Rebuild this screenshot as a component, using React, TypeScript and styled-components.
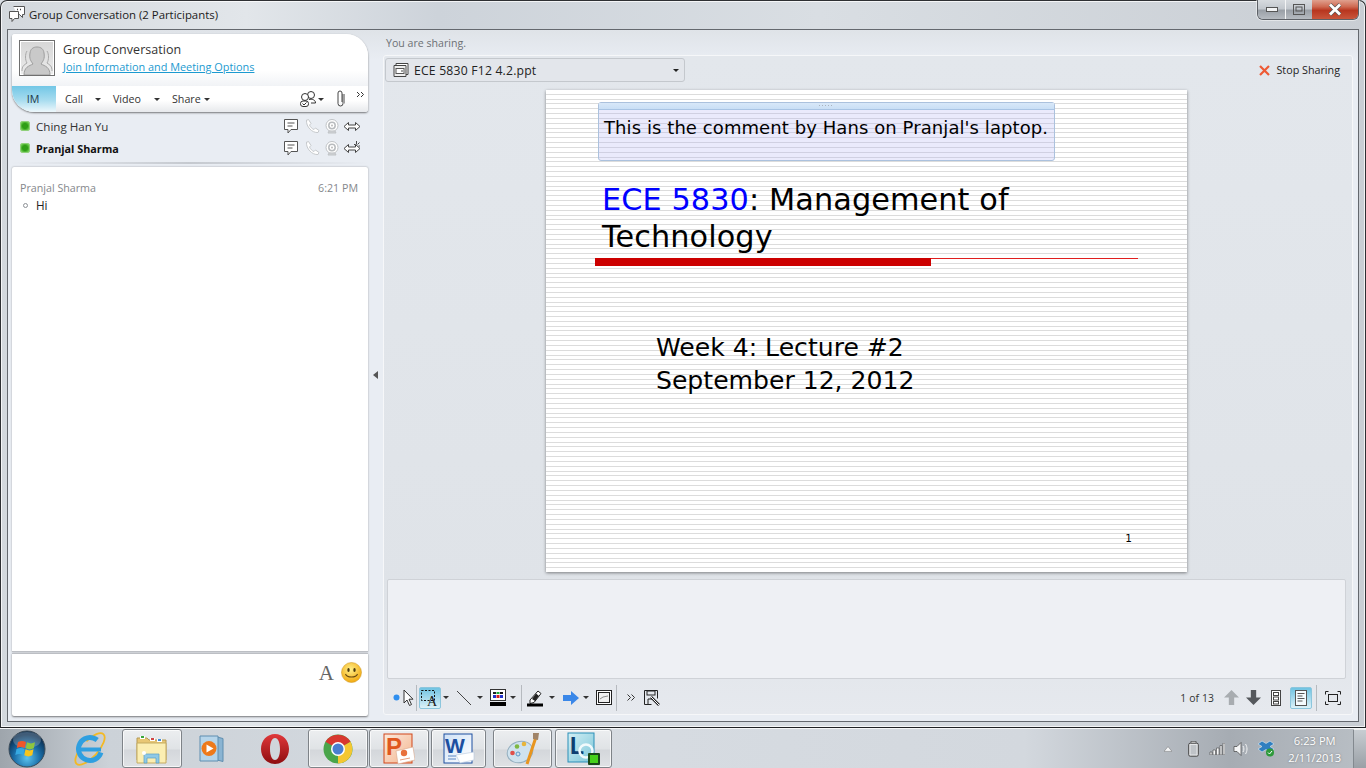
import React from "react";
import styled, { createGlobalStyle } from "styled-components";

const Global = createGlobalStyle`
  html, body { margin: 0; padding: 0; width: 1366px; height: 768px; overflow: hidden; background: #d8dde3; }
  #root { width: 1366px; height: 768px; }
  * { box-sizing: border-box; }
`;

const UI = `"Open Sans", "Noto Sans", sans-serif`;
const SLIDE = `"DejaVu Sans", Verdana, sans-serif`;

const Screen = styled.div`
  width: 1366px; height: 768px; display: flex; flex-direction: column;
  font-family: ${UI}; color: #222; overflow: hidden;
`;
const Win = styled.div`
  height: 728px; display: flex; flex-direction: column; position: relative;
  border: 1px solid #2e3033; border-bottom-color: #1f2124; border-radius: 7px 7px 0 0;
  box-shadow: inset 0 0 0 1px rgba(255,255,255,.75);
  background: linear-gradient(90deg, #d3d8dd 0, #e2e6ea 18%, #cdd3da 32%, #d9dee3 60%, #c9ced4 100%);
  padding: 0 6px 5px 6px;
`;
const TitleBar = styled.div`
  height: 28px; display: flex; align-items: center; padding: 0 0 2px 1px; gap: 3px;
  font-size: 11.4px; color: #1b1b1b; flex: none;
`;
const Controls = styled.div`
  position: absolute; top: -1px; right: 6px; height: 20px; display: flex;
  border: 1px solid #5d6167; border-top: none; border-radius: 0 0 6px 6px; overflow: hidden;
  box-shadow: 0 0 0 1px rgba(255,255,255,.45);
`;
const Ctl = styled.div<{ $w: number; $red?: boolean }>`
  width: ${p => p.$w}px; display: flex; align-items: center; justify-content: center;
  border-left: ${p => (p.$red ? "none" : "1px solid #f4f5f6")};
  background: ${p => p.$red
    ? "linear-gradient(#e0a08e 0, #cf6a52 35%, #b8361f 55%, #c9563c 100%)"
    : "linear-gradient(#d7dbdf 0, #c3c8ce 45%, #9aa0a7 55%, #b6bbc1 100%)"};
  &:first-child { border-left: none; }
`;
const Client = styled.div`
  flex: 1; min-height: 0; display: flex; padding: 4px 5px 5px 4px;
  border: 1px solid #64686e; background: linear-gradient(#dfe3e8 0, #e9edf3 30px, #e9edf3 100%);
`;
const LeftCol = styled.div`
  width: 356px; flex: none; display: flex; flex-direction: column;
`;
const HeaderCard = styled.div`
  height: 78px; flex: none; background: #fff;
  box-shadow: 0 1px 2px rgba(0,0,0,.5); display: flex; flex-direction: column; overflow: hidden;
  border-radius: 3px 22px 3px 22px;
`;
const Identity = styled.div`
  height: 52px; display: flex; padding: 6px 7px; gap: 8px; flex: none;
  background: linear-gradient(#fff 70%, #f1f3f6 100%);
`;
const Avatar = styled.div`
  width: 36px; height: 36px; border: 1px solid #6f6f6f; box-shadow: inset 0 0 0 1px #fff;
  background: linear-gradient(#d6d6d6, #ececec); display: flex;
`;
const IdText = styled.div`
  display: flex; flex-direction: column; padding-top: 1px;
`;
const ConvTitle = styled.div`
  font-size: 12.5px; line-height: 18px; color: #333; letter-spacing: .05px;
`;
const JoinLink = styled.a`
  font-size: 10.9px; line-height: 16px; color: #1c9ad0; text-decoration: underline;
`;
const TabRow = styled.div`
  flex: 1; display: flex; align-items: center; position: relative;
  background: linear-gradient(#fff 55%, #e7e9ec 100%); font-size: 10.7px; color: #333;
`;
const ImTab = styled.div`
  width: 44px; height: 100%; flex: none; display: flex; align-items: center; justify-content: center;
  padding-right: 2px; background: linear-gradient(#72c7e6 0, #a8dcef 55%, #eef8fc 100%); color: #1d3a4a;
`;
const Tab = styled.div<{ $w: number }>`
  width: ${p => p.$w}px; flex: none; display: flex; align-items: center; justify-content: space-between;
`;
const Caret = styled.span<{ $c?: string }>`
  display: inline-block; width: 0; height: 0; flex: none;
  border-left: 3px solid transparent; border-right: 3px solid transparent;
  border-top: 3px solid ${p => p.$c || "#333"};
`;
const Spacer = styled.div`flex: 1;`;
const Parts = styled.div`
  height: 52px; flex: none; display: flex; flex-direction: column; padding: 3px 7px 0 8px;
  border-bottom: 2px solid; border-image: linear-gradient(90deg, #e9edf3 0, #c5c9cf 50%, #e9edf3 100%) 1;
  margin-bottom: 3px;
`;
const PartRow = styled.div`
  height: 22px; display: flex; align-items: center; font-size: 11px; color: #333;
`;
const Status = styled.span`
  width: 10px; height: 10px; flex: none; border-radius: 2px; margin-right: 6px;
  background: radial-gradient(#2f9e17 45%, #8be06a 100%); border: 1px solid #8fd07a;
`;
const PartName = styled.span<{ $b?: boolean }>`
  font-weight: ${p => (p.$b ? 700 : 400)}; color: ${p => (p.$b ? "#111" : "#333")}; flex: 1;
  font-size: ${p => (p.$b ? 10.8 : 11.6)}px;
`;
const PartIcons = styled.div`
  display: flex; gap: 2px; align-items: center;
`;
const ChatCard = styled.div`
  height: 485px; flex: none; background: #fff; box-shadow: 0 0 2px rgba(0,0,0,.35); border-radius: 2px 2px 0 0;
  padding: 13px 10px 0 8px; border-bottom: 1px solid #bcbfc4;
`;
const MsgHead = styled.div`
  display: flex; justify-content: space-between; font-size: 10.7px; line-height: 16px; color: #85888c;
`;
const MsgRow = styled.div`
  display: flex; align-items: center; font-size: 11.7px; line-height: 18px; color: #222;
`;
const Bullet = styled.span`
  width: 5px; height: 5px; border: 1px solid #8d9196; border-radius: 50%; margin: 0 8px 0 3px;
`;
const InputCard = styled.div`
  flex: 1; margin-top: 1px; background: #fff; border-top: 1px solid #bcbfc4; box-shadow: 0 1px 2px rgba(0,0,0,.5);
  border-radius: 0 0 2px 2px; display: flex; justify-content: flex-end; align-items: flex-start;
  padding: 8px 6px 0 0; gap: 7px;
`;
const FontA = styled.span`
  font-family: "Liberation Serif", serif; font-size: 21px; line-height: 23px; color: #666;
`;
const Splitter = styled.div`
  width: 15px; flex: none; display: flex; align-items: center; justify-content: center;
`;
const RightCol = styled.div`
  flex: 1; min-width: 0; display: flex; flex-direction: column;
`;
const SharingLabel = styled.div`
  height: 21px; flex: none; font-size: 10.6px; color: #6d7175; display: flex; align-items: center;
  padding: 0 0 4px 3px;
`;
const Panel = styled.div`
  height: 660px; flex: none; display: flex; flex-direction: column; border: 1px solid #f6f7f9;
  border-radius: 3px; background: linear-gradient(#e3e7ec, #dfe3e8 540px, #e6e9ee 100%); padding: 0 1px 0 1px;
`;
const ControlRow = styled.div`
  height: 34px; flex: none; display: flex; align-items: flex-start; justify-content: space-between;
  padding: 2px 0 0 0;
`;
const FilePicker = styled.div`
  width: 300px; height: 24px; border: 1px solid #c4c8cd; border-radius: 3px; display: flex; align-items: center;
  padding: 0 5px 0 7px; gap: 5px; font-size: 12.2px; letter-spacing: .2px; color: #222; background: #e3e6eb;
`;
const FileName = styled.span`flex: 1;`;
const StopShare = styled.div`
  display: flex; align-items: center; gap: 6px; font-size: 10.75px; color: #222; padding: 0 11px 0 0; height: 24px;
`;
const SlideWrap = styled.div`
  height: 482px; flex: none; display: flex; justify-content: flex-start; padding-left: 161px;
`;
const Slide = styled.div`
  width: 641px; height: 482px; flex: none; position: relative; font-family: ${SLIDE}; color: #000;
  box-shadow: 0 1px 3px rgba(0,0,0,.45); overflow: hidden; padding: 12px 48px 0 49px;
  background: repeating-linear-gradient(to bottom, #fff 0, #fff 3.83px, #dcdcdc 3.83px, #dcdcdc 4.83px);
  display: flex; flex-direction: column;
`;
const Comment = styled.div`
  width: 457px; height: 59px; margin-left: 3px; flex: none; border: 1px solid #abc1dd; border-radius: 3px;
  background: rgba(178,178,245,.28); display: flex; flex-direction: column;
`;
const CommentHead = styled.div`
  height: 7px; flex: none; background: linear-gradient(#d8e8f8, #c9dff5); border-bottom: 1px solid #a9c4e4;
  display: flex; justify-content: center; align-items: center; font-size: 0;
`;
const Grip = styled.span`
  width: 15px; height: 1px; margin-top: -2px;
  background: repeating-linear-gradient(90deg, #aab3bd 0 1px, transparent 1px 3px);
`;
const CommentText = styled.div`
  font-size: 18px; letter-spacing: .08px; line-height: 24px; padding: 6px 0 0 5px; white-space: nowrap;
`;
const SlideTitle = styled.div`
  margin: 20px 0 0 7px; font-size: 30.3px; line-height: 37px; white-space: nowrap; letter-spacing: .1px;
`;
const Blue = styled.span`color: #0000ff;`;
const Rule = styled.div`
  margin-top: 3px; height: 8px; width: 543px; position: relative; flex: none; display: flex; align-items: flex-start;
`;
const RuleThick = styled.div`
  width: 336px; height: 8px; background: #cc0000; flex: none;
`;
const RuleThin = styled.div`
  flex: 1; height: 1px; background: #e01f1f;
`;
const Sub = styled.div`
  margin: 65px 0 0 61px; font-size: 25.1px; line-height: 33px; white-space: nowrap;
`;
const PageNo = styled.div`
  position: absolute; right: 55px; top: 442px; font-size: 10.5px; line-height: 13px;
`;
const NoteBox = styled.div`
  height: 100px; flex: none; margin: 7px 5px 0 2px; background: #eef0f4; border: 1px solid #cfd2d7; border-radius: 2px;
`;
const Toolbar = styled.div`
  flex: 1; display: flex; align-items: center; padding: 2px 0 0 7px;
`;
const Slot = styled.div<{ $w: number; $ml?: number }>`
  width: ${p => p.$w}px; margin-left: ${p => p.$ml || 0}px; height: 22px; flex: none; display: flex;
  align-items: center; justify-content: center;
`;
const ActiveBtn = styled(Slot)`
  border: 1px solid #8cc6dd; border-radius: 2px; background: linear-gradient(#6fc3e2, #c5e7f3 80%, #dcf1f8);
`;
const Sep = styled.div<{ $ml?: number }>`
  width: 1px; height: 26px; background: #b6babf; flex: none; margin-left: ${p => p.$ml || 0}px;
`;
const PageText = styled.div`
  font-size: 10.4px; color: #333; margin-right: 9px; letter-spacing: .1px;
`;

const Taskbar = styled.div`
  height: 40px; flex: none; display: flex; align-items: stretch; position: relative; padding-top: 0;
  background: linear-gradient(90deg, #9ea5ac 0, #ccd2d8 8%, #d7dce2 40%, #d3d8de 75%, #a6acb3 90%, #b9bfc5 100%);
  border-top: 1px solid #f5f6f7;
`;
const TaskItem = styled.div<{ $l: number; $w: number; $btn?: boolean }>`
  width: ${p => p.$w}px; margin-left: ${p => p.$l}px; flex: none; display: flex; align-items: center; justify-content: center;
  ${p => p.$btn ? `
    border: 1px solid #7e8388; border-radius: 3px; box-shadow: inset 0 0 0 1px rgba(255,255,255,.7);
    background: linear-gradient(#eceef0, #e0e3e6 50%, #d4d7db 55%, #dfe2e5);
  ` : ""}
`;
const Tray = styled.div`
  position: absolute; right: 0; top: 0; bottom: 0; width: 206px; display: flex; align-items: center;
`;
const Clock = styled.div`
  width: 79px; margin-left: 2px; text-align: center; color: #fff; font-size: 11.2px; line-height: 17px;
  text-shadow: 0 0 2px rgba(60,60,60,.55);
`;
const ShowDesk = styled.div`
  width: 14px; height: 100%; margin-left: auto; border-left: 1px solid #83898f; border-top: 1px solid #eee;
  background: linear-gradient(#c8cdd2, #9aa0a6);
`;

const s = { fill: "none", stroke: "#555", strokeWidth: 1 };

const ChatIcon = () => (
  <svg width="18" height="17" viewBox="0 0 18 17"><path d="M1.500 1.500h13v10H8l-3 3.500v-3.500H1.500z" {...s} fill="#fff" /><path d="M4.500 5h7M4.500 8h5" {...s} /></svg>
);
const PhoneIcon = () => (
  <svg width="18" height="17" viewBox="0 0 18 17"><path d="M3 2.500l2.500-1 2.500 4-1.500 1.500c1 2.200 2.400 3.600 4.500 4.500l1.500-1.500 3.500 2.500-1 2c-6 .6-12-6-11.500-12z" fill="#fff" stroke="#c6c9cc" /></svg>
);
const CamIcon = () => (
  <svg width="18" height="17" viewBox="0 0 18 17"><circle cx="9" cy="7.500" r="6" fill="#fff" stroke="#c0c3c6" /><circle cx="9" cy="7.500" r="3.200" fill="none" stroke="#b8bbbe" strokeWidth="1.500" /><circle cx="9" cy="7.500" r="1" fill="#bbb" /><path d="M5 15h8l-1-2H6z" fill="#d0d3d6" stroke="#c0c3c6" /></svg>
);
const ShareIcon = ({ spark }: { spark?: boolean }) => (
  <svg width="18" height="17" viewBox="0 0 18 17"><path d="M1 8.500l4.500-4v2.500h7V4.500l4.500 4-4.500 4V10h-7v2.500z" fill="#fff" stroke="#444" />{spark && <path d="M11 4l1.500 1.500M13.500 1v3.500M16.500 2.500l-2 2M17 6h-1.500" stroke="#333" strokeWidth=".9" fill="none" />}</svg>
);

const ToolArrow = () => (
  <svg width="16" height="20" viewBox="0 0 16 20"><path d="M4 2v13l3-3 2.500 5.500 2-1L9 11.200h4z" fill="#fff" stroke="#333" /></svg>
);

const Taskicon = {
  Orb: () => (
    <svg width="38" height="38" viewBox="0 0 38 38">
      <defs><radialGradient id="orb" cx="50%" cy="75%" r="65%"><stop offset="0" stopColor="#5cc3ee" /><stop offset=".55" stopColor="#1a6ea8" /><stop offset="1" stopColor="#0b2f52" /></radialGradient></defs>
      <circle cx="19" cy="19" r="18" fill="url(#orb)" stroke="#3c4b58" />
      <ellipse cx="19" cy="10" rx="14" ry="8" fill="#fff" opacity=".22" />
      <path d="M10 12c3-1.500 5-1.500 8 0l-1.200 6c-3-1.500-5-1.500-8 0z" fill="#f0562a" />
      <path d="M19 12.300c3 1.500 5 1.500 8 0l-1.200 6c-3 1.500-5 1.500-8 0z" fill="#8ec63f" />
      <path d="M8.500 19c3-1.500 5-1.500 8 0l-1.200 6c-3-1.500-5-1.500-8 0z" fill="#36a9e1" />
      <path d="M17.500 19.300c3 1.500 5 1.500 8 0l-1.200 6c-3 1.500-5 1.500-8 0z" fill="#f7c51c" />
    </svg>
  ),
  IE: () => (
    <svg width="32" height="34" viewBox="0 0 32 34" style={{ overflow: "visible" }}>
      <ellipse cx="16" cy="17" rx="20" ry="8" transform="rotate(-48 16 17)" fill="none" stroke="#f4b923" strokeWidth="1.800" strokeDasharray="62 10" />
      <circle cx="16" cy="17" r="11.500" fill="none" stroke="#2f9fe0" strokeWidth="5" strokeDasharray="58 14" transform="rotate(18 16 17)" />
      <path d="M5 17.500h22" stroke="#2f9fe0" strokeWidth="4" />
    </svg>
  ),
  Folder: () => (
    <svg width="32" height="32" viewBox="0 0 32 32">
      <path d="M1 5h10l2 2h17v20H1z" fill="#e8c774" stroke="#b59a55" />
      <rect x="4" y="3" width="5" height="3" fill="#fff" /><rect x="5" y="3" width="3" height="2" fill="#3aa63a" />
      <rect x="14" y="5" width="5" height="3" fill="#fff" /><rect x="15" y="5" width="3" height="2" fill="#d04545" />
      <rect x="21" y="6" width="5" height="3" fill="#fff" /><rect x="22" y="6" width="3" height="2" fill="#3f8fdc" />
      <path d="M1 10h29v20H1z" fill="#fbeeb2" stroke="#c4ab63" />
      <path d="M8 21h15v9h-3v-5h-9v5H8z" fill="#8fc9e6" stroke="#5a9fc4" strokeWidth=".7" />
      <circle cx="8" cy="20" r="2" fill="#fff" />
    </svg>
  ),
  WMP: () => (
    <svg width="28" height="30" viewBox="0 0 28 30">
      <path d="M19 3l6 1.500v23L19 26z" fill="#8ab4d2" stroke="#5f8eb0" />
      <path d="M2 2h18v25H2z" fill="#b6d5ea" stroke="#5f8eb0" />
      <circle cx="11" cy="14.500" r="7.500" fill="#ee7a1b" />
      <path d="M8.500 10.500l7 4-7 4z" fill="#fff" />
    </svg>
  ),
  Opera: () => (
    <svg width="30" height="30" viewBox="0 0 30 30">
      <defs><linearGradient id="op" x1="0" x2="0" y1="0" y2="1"><stop offset="0" stopColor="#e0383a" /><stop offset="1" stopColor="#8e0d10" /></linearGradient></defs>
      <path fillRule="evenodd" d="M15 0c8 0 14 6.500 14 15s-6 15-14 15S1 23.500 1 15 7 0 15 0zm0 4c-3 0-5 4.500-5 11s2 11 5 11 5-4.500 5-11-2-11-5-11z" fill="url(#op)" />
    </svg>
  ),
  Chrome: () => (
    <svg width="30" height="30" viewBox="0 0 30 30">
      <circle cx="15" cy="15" r="14.500" fill="#4aa54a" />
      <path d="M15 15L27.500 7.800a14.500 14.500 0 0 0-25 0z" fill="#d8382f" />
      <path d="M15 15l12.500-7.200A14.500 14.500 0 0 1 15 29.500z" fill="#f5c731" />
      <circle cx="15" cy="15" r="7" fill="#fff" /><circle cx="15" cy="15" r="5.500" fill="#4a7fd0" />
    </svg>
  ),
  PPT: () => (
    <svg width="32" height="32" viewBox="0 0 32 32">
      <defs><linearGradient id="pg" x1="0" x2="1" y1="0" y2="1"><stop offset="0" stopColor="#fbe9dc" /><stop offset="1" stopColor="#f4b58f" /></linearGradient></defs>
      <rect x="1" y="1" width="28" height="29" fill="url(#pg)" stroke="#d2461a" />
      <text x="3" y="22" fontFamily="Liberation Sans" fontWeight="700" fontSize="24" fill="#e0571e">P</text>
      <path d="M13 18l17-4 2 13-17 4z" fill="#fff" stroke="#d8a68a" strokeWidth=".6" />
      <circle cx="21" cy="20" r="3.200" fill="#e8713c" />
      <path d="M17 27l10-2" stroke="#e8a080" />
    </svg>
  ),
  Word: () => (
    <svg width="32" height="32" viewBox="0 0 32 32">
      <defs><linearGradient id="wg" x1="0" x2="1" y1="0" y2="1"><stop offset="0" stopColor="#cfe1f6" /><stop offset="1" stopColor="#fff" /></linearGradient></defs>
      <rect x="1" y="1" width="28" height="29" fill="url(#wg)" stroke="#1c4fa0" />
      <text x="2" y="20" fontFamily="Liberation Sans" fontWeight="700" fontSize="21" fill="#1c4fa0">W</text>
      <path d="M13 22l18-3v8l-14 3z" fill="#fff" stroke="#b5c7de" strokeWidth=".6" />
      <path d="M5 23h8M5 26h8" stroke="#5b86c4" />
    </svg>
  ),
  Paint: () => (
    <svg width="34" height="36" viewBox="0 0 34 36">
      <ellipse cx="14" cy="21" rx="13" ry="10.500" transform="rotate(-18 14 21)" fill="#cfe2ee" stroke="#93aebf" />
      <circle cx="6.500" cy="22" r="2.300" fill="#e0504a" /><circle cx="11" cy="15.500" r="2.300" fill="#7fb843" />
      <circle cx="18" cy="13" r="2.300" fill="#e8b53a" /><circle cx="12" cy="23" r="2" fill="#cfe2ee" stroke="#5b96c8" />
      <path d="M30 6L21 33" stroke="#e8951f" strokeWidth="3" /><path d="M27 2l6 0 -1 7-5-1z" fill="#a08468" />
    </svg>
  ),
  Lync: () => (
    <svg width="34" height="34" viewBox="0 0 34 34">
      <defs><linearGradient id="lg" x1="0" x2="1" y1="0" y2="1"><stop offset="0" stopColor="#d3eff5" /><stop offset="1" stopColor="#7cc6d8" /></linearGradient></defs>
      <rect x="1" y="1" width="26" height="29" fill="url(#lg)" stroke="#2b8fb8" />
      <text x="3" y="22" fontFamily="Liberation Sans" fontWeight="700" fontSize="23" fill="#0d3f72">L</text>
      <circle cx="19" cy="19" r="6.500" fill="none" stroke="#f2fafc" strokeWidth="2.500" />
      <rect x="21" y="21" width="12" height="12" rx="1" fill="#1a4a1a" /><rect x="23" y="23" width="8" height="8" fill="#46d11b" />
    </svg>
  ),
};

export default function App() {
  return (
    <Screen>
      <Global />
      <Win>
        <TitleBar>
          <svg width="18" height="18" viewBox="0 0 18 18"><path d="M5.500 1.500h11v8h-2v3l-3-3H9" fill="#fff" stroke="#555" /><path d="M1.500 6.500h9v7h-4l-2.500 3v-3H1.500z" fill="#fff" stroke="#555" /><path d="M9 4.500h1M12 4.500h1" stroke="#444" strokeWidth="1.500" /></svg>
          <span>Group Conversation (2 Participants)</span>
        </TitleBar>
        <Controls>
          <Ctl $w={27}><svg width="12" height="6" viewBox="0 0 12 6"><rect x=".5" y=".5" width="11" height="4" fill="#f2f3f4" stroke="#555" /></svg></Ctl>
          <Ctl $w={27}><svg width="12" height="11" viewBox="0 0 12 11"><rect x=".5" y=".5" width="11" height="10" fill="none" stroke="#555" /><rect x="3" y="3" width="6" height="4" fill="none" stroke="#555" /></svg></Ctl>
          <Ctl $w={46} $red><svg width="16" height="13" viewBox="0 0 16 13"><path d="M3 1.500l10 10M13 1.500l-10 10" stroke="#555" strokeWidth="4" fill="none" /><path d="M3 1.500l10 10M13 1.500l-10 10" stroke="#fff" strokeWidth="2.800" fill="none" /></svg></Ctl>
        </Controls>
        <Client>
          <LeftCol>
            <HeaderCard>
              <Identity>
                <Avatar>
                  <svg width="34" height="34" viewBox="0 0 34 34"><path d="M4 34c0-8 5-9 9-11-2-3-4-5-3-11 .5-4 3-6 7-6s6.500 2 7 6c1 6-1 8-3 11 4 2 9 3 9 11z" fill="#c9c9c9" stroke="#9d9d9d" /><path d="M2 30c0-5 2-6 5-8-2-3-2-9 0-12M32 30c0-5-2-6-5-8 2-3 2-9 0-12" fill="none" stroke="#a9a9a9" /></svg>
                </Avatar>
                <IdText>
                  <ConvTitle>Group Conversation</ConvTitle>
                  <JoinLink>Join Information and Meeting Options</JoinLink>
                </IdText>
              </Identity>
              <TabRow>
                <ImTab>IM</ImTab>
                <Slot $w={9} />
                <Tab $w={36}>Call<Caret /></Tab>
                <Slot $w={12} />
                <Tab $w={47}>Video<Caret /></Tab>
                <Slot $w={12} />
                <Tab $w={38}>Share<Caret /></Tab>
                <Spacer />
                <svg width="18" height="18" viewBox="0 0 18 18"><circle cx="12" cy="5" r="3.500" fill="#fff" stroke="#333" /><circle cx="6" cy="7" r="3.500" fill="#fff" stroke="#333" /><path d="M10 9.500c3-.5 6.500 0 6.500 3.500H12" fill="#fff" stroke="#333" /><rect x="1.500" y="11" width="8" height="5.500" rx="2.500" fill="#fff" stroke="#333" /><path d="M3.500 13.500l1.500 1.500 2.500-2.500" stroke="#333" fill="none" /></svg>
                <Slot $w={6} $ml={1}><Caret /></Slot>
                <Slot $w={18} $ml={8}><svg width="10" height="18" viewBox="0 0 10 18"><path d="M7 4v9.500a2.500 2.500 0 0 1-5 0V3a2 2 0 0 1 4 0v9" fill="none" stroke="#444" /><path d="M8.500 4v9.500" stroke="#444" fill="none" opacity=".5" /></svg></Slot>
                <Slot $w={12} $ml={4}><svg width="9" height="16" viewBox="0 0 9 16"><path d="M1 1l2.500 2.500L1 6M5 1l2.500 2.500L5 6" fill="none" stroke="#333" /></svg></Slot>
                <Slot $w={1} $ml={1} />
              </TabRow>
            </HeaderCard>
            <Parts>
              <PartRow>
                <Status /><PartName>Ching Han Yu</PartName>
                <PartIcons><ChatIcon /><PhoneIcon /><CamIcon /><ShareIcon /></PartIcons>
              </PartRow>
              <PartRow>
                <Status /><PartName $b>Pranjal Sharma</PartName>
                <PartIcons><ChatIcon /><PhoneIcon /><CamIcon /><ShareIcon spark /></PartIcons>
              </PartRow>
            </Parts>
            <ChatCard>
              <MsgHead><span>Pranjal Sharma</span><span>6:21 PM</span></MsgHead>
              <MsgRow><Bullet />Hi</MsgRow>
            </ChatCard>
            <InputCard>
              <FontA>A</FontA>
              <svg width="21" height="21" viewBox="0 0 21 21">
                <defs><radialGradient id="sm" cx="45%" cy="35%" r="65%"><stop offset="0" stopColor="#ffef8a" /><stop offset="1" stopColor="#f2a90f" /></radialGradient></defs>
                <circle cx="10.500" cy="10.500" r="10" fill="url(#sm)" stroke="#d2a030" strokeWidth=".6" />
                <ellipse cx="7.500" cy="8" rx="1.200" ry="2" fill="#4a3a10" /><ellipse cx="13.500" cy="8" rx="1.200" ry="2" fill="#4a3a10" />
                <path d="M4.500 12c1.500 4 10.500 4 12 0" fill="none" stroke="#6a4a10" strokeWidth="1.100" />
              </svg>
            </InputCard>
          </LeftCol>
          <Splitter>
            <svg width="5" height="8" viewBox="0 0 5 8"><path d="M5 0v8L0 4z" fill="#555" /></svg>
          </Splitter>
          <RightCol>
            <SharingLabel>You are sharing.</SharingLabel>
            <Panel>
              <ControlRow>
                <FilePicker>
                  <svg width="16" height="16" viewBox="0 0 16 16"><path d="M3 1.500h12v11H3z" fill="#fff" stroke="#444" /><path d="M1 3.500h12v11H1z" fill="#eee" stroke="#444" /><rect x="3" y="6.500" width="8" height="5" fill="#fff" stroke="#555" /><path d="M8 9h2" stroke="#444" /></svg>
                  <FileName>ECE 5830 F12 4.2.ppt</FileName>
                  <Caret $c="#222" />
                </FilePicker>
                <StopShare>
                  <svg width="11" height="11" viewBox="0 0 11 11"><path d="M1 1l9 9M10 1l-9 9" stroke="#ee5a35" strokeWidth="2.200" /></svg>
                  <span>Stop Sharing</span>
                </StopShare>
              </ControlRow>
              <SlideWrap>
                <Slide>
                  <Comment>
                    <CommentHead><Grip /></CommentHead>
                    <CommentText>This is the comment by Hans on Pranjal's laptop.</CommentText>
                  </Comment>
                  <SlideTitle><Blue>ECE 5830</Blue>: Management of<br />Technology</SlideTitle>
                  <Rule><RuleThick /><RuleThin /></Rule>
                  <Sub>Week 4: Lecture #2<br />September 12, 2012</Sub>
                  <PageNo>1</PageNo>
                </Slide>
              </SlideWrap>
              <NoteBox />
              <Toolbar>
                <Slot $w={7} $ml={1}><svg width="7" height="7" viewBox="0 0 7 7"><circle cx="3.500" cy="3.500" r="3" fill="#2f8fef" /></svg></Slot>
                <Slot $w={16}><ToolArrow /></Slot>
                <Sep $ml={0} />
                <ActiveBtn $w={22} $ml={2}><svg width="20" height="20" viewBox="0 0 20 20"><rect x="1.500" y="2.500" width="13" height="10" fill="none" stroke="#111" strokeDasharray="2 1.500" /><text x="7" y="18" fontFamily="Liberation Serif" fontSize="14" fill="#222">A</text></svg></ActiveBtn>
                <Slot $w={10} $ml={0}><Caret /></Slot>
                <Slot $w={16} $ml={5}><svg width="16" height="16" viewBox="0 0 16 16"><path d="M1 1l14 14" stroke="#444" /></svg></Slot>
                <Slot $w={10} $ml={3}><Caret /></Slot>
                <Slot $w={16} $ml={5}><svg width="16" height="18" viewBox="0 0 16 18"><rect x=".5" y=".5" width="15" height="11" fill="#fff" stroke="#333" /><rect x="3" y="3" width="3" height="2" fill="#222" /><rect x="6.500" y="3" width="3" height="2" fill="#1aa83a" /><rect x="10" y="3" width="3" height="2" fill="#111" /><rect x="3" y="6" width="3" height="3" fill="#2233cc" /><rect x="6.500" y="6" width="3" height="3" fill="#d81f1f" /><rect x="10" y="6" width="3" height="3" fill="#2233cc" /><rect y="13" width="16" height="4" fill="#000" /></svg></Slot>
                <Slot $w={10} $ml={2}><Caret /></Slot>
                <Sep $ml={3} />
                <Slot $w={17} $ml={5}><svg width="17" height="18" viewBox="0 0 17 18"><path d="M3 11L11 2l3 2.500-7 9-4 1z" fill="#fff" stroke="#222" /><path d="M9 4.500l3 2.500-4 5-3-2z" fill="#222" /><rect y="14.500" width="16" height="3" fill="#000" /></svg></Slot>
                <Slot $w={10} $ml={3}><Caret /></Slot>
                <Slot $w={16} $ml={6}><svg width="16" height="14" viewBox="0 0 16 14"><path d="M0 4h8V0l8 7-8 7v-4H0z" fill="#3a87e8" /></svg></Slot>
                <Slot $w={10} $ml={2}><Caret /></Slot>
                <Slot $w={16} $ml={5}><svg width="16" height="15" viewBox="0 0 16 15"><rect x=".5" y=".5" width="15" height="14" fill="#fff" stroke="#222" /><rect x="2.500" y="2.500" width="11" height="10" fill="#eee" stroke="#222" /><path d="M4 9l3-2 5-1" stroke="#888" fill="none" /></svg></Slot>
                <Sep $ml={4} />
                <Slot $w={10} $ml={9}><svg width="8" height="7" viewBox="0 0 8 7"><path d="M.5.500l3 3-3 3M4.500.500l3 3-3 3" fill="none" stroke="#333" /></svg></Slot>
                <Slot $w={16} $ml={8}><svg width="16" height="16" viewBox="0 0 16 16"><path d="M.5.500h13v8M.5.500v14h7" fill="none" stroke="#222" /><rect x="3" y="1" width="8" height="4" fill="none" stroke="#222" /><path d="M4 14v-5h5" fill="none" stroke="#222" /><path d="M7 7l8 8" stroke="#222" strokeWidth="2.500" /><path d="M7 7l8 8" stroke="#fff" strokeWidth="1" /></svg></Slot>
                <Spacer />
                <PageText>1 of 13</PageText>
                <Slot $w={16} $ml={0}><svg width="15" height="15" viewBox="0 0 14 14"><path d="M7 0l7 7H9.500v7h-5V7H0z" fill="#a8acb0" /></svg></Slot>
                <Slot $w={16} $ml={6}><svg width="15" height="15" viewBox="0 0 14 14"><path d="M7 14L0 7h4.500V0h5v7H14z" fill="#55585c" /></svg></Slot>
                <Slot $w={12} $ml={9}><svg width="10" height="16" viewBox="0 0 10 16"><rect x=".5" y=".5" width="9" height="15" fill="#fff" stroke="#444" /><rect x="2.500" y="2.500" width="5" height="3" fill="none" stroke="#444" /><rect x="2.500" y="7" width="5" height="3" fill="none" stroke="#444" /><rect x="2.500" y="11.500" width="5" height="2.500" fill="none" stroke="#444" /></svg></Slot>
                <ActiveBtn $w={22} $ml={8}><svg width="12" height="16" viewBox="0 0 12 16"><rect x=".5" y=".5" width="11" height="15" fill="#f4fbfe" stroke="#555" /><path d="M2.500 3.500h7M2.500 6h5M2.500 8.500h7M2.500 11h5" stroke="#555" /></svg></ActiveBtn>
                <Sep $ml={4} />
                <Slot $w={16} $ml={8}><svg width="16" height="14" viewBox="0 0 16 14"><path d="M.5 3.500v-3h3M12.500.500h3v3M15.500 10.500v3h-3M3.500 13.500h-3v-3" fill="none" stroke="#222" /><rect x="3.500" y="3.500" width="9" height="7" fill="none" stroke="#222" /></svg></Slot>
                <Slot $w={10} />
              </Toolbar>
            </Panel>
          </RightCol>
        </Client>
      </Win>
      <Taskbar>
        <TaskItem $l={8} $w={38}><Taskicon.Orb /></TaskItem>
        <TaskItem $l={28} $w={32}><Taskicon.IE /></TaskItem>
        <TaskItem $l={16} $w={60} $btn><Taskicon.Folder /></TaskItem>
        <TaskItem $l={16} $w={28}><Taskicon.WMP /></TaskItem>
        <TaskItem $l={34} $w={30}><Taskicon.Opera /></TaskItem>
        <TaskItem $l={18} $w={60} $btn><Taskicon.Chrome /></TaskItem>
        <TaskItem $l={1} $w={60} $btn><Taskicon.PPT /></TaskItem>
        <TaskItem $l={2} $w={55} $btn><Taskicon.Word /></TaskItem>
        <TaskItem $l={7} $w={59} $btn><Taskicon.Paint /></TaskItem>
        <TaskItem $l={3} $w={57} $btn><Taskicon.Lync /></TaskItem>
        <Tray>
          <Slot $w={8} $ml={4}><svg width="10" height="6" viewBox="0 0 10 6"><path d="M5 0l5 6H0z" fill="#f4f5f6" stroke="#555" strokeWidth=".5" /></svg></Slot>
          <Slot $w={12} $ml={15}><svg width="11" height="16" viewBox="0 0 11 16"><rect x="3" y=".5" width="5" height="2" fill="#eee" stroke="#444" strokeWidth=".6" /><rect x=".7" y="2.200" width="9.600" height="13" rx="1.500" fill="#e4e6e8" stroke="#444" strokeWidth="1" /><rect x="2.500" y="4" width="6" height="9.500" fill="#bfc3c7" /></svg></Slot>
          <Slot $w={16} $ml={10}><svg width="16" height="12" viewBox="0 0 16 12"><path d="M1 9h2v3H1zM4 7h2.500v5H4zM7.500 5H10v7H7.500zM11 2.500h2v9.500h-2zM14 0h2v12h-2z" fill="#f6f7f8" stroke="#444" strokeWidth=".6" /></svg></Slot>
          <Slot $w={16} $ml={7}><svg width="15" height="14" viewBox="0 0 15 14"><path d="M1 4.500h3l4-4v13l-4-4H1z" fill="#f4f5f6" stroke="#444" strokeWidth=".7" /><path d="M10 4c1.200 2 1.200 4 0 6M12.500 2c2 3 2 7 0 10" stroke="#f4f5f6" fill="none" /></svg></Slot>
          <Slot $w={18} $ml={9}><svg width="18" height="17" viewBox="0 0 18 17"><path d="M1 4l4-3 4 2.500L13 1l4 3-4 2.500L17 9l-4 3-4-2.500L5 12 1 9l4-2.500z" fill="#2f7fc0" stroke="#dce9f3" strokeWidth=".6" /><circle cx="13" cy="12.500" r="4" fill="#2d9a3a" /><path d="M11 12.500l1.500 1.500 2.500-3" stroke="#fff" fill="none" /></svg></Slot>
          <Clock>6:23 PM<br />2/11/2013</Clock>
          <ShowDesk />
        </Tray>
      </Taskbar>
    </Screen>
  );
}
